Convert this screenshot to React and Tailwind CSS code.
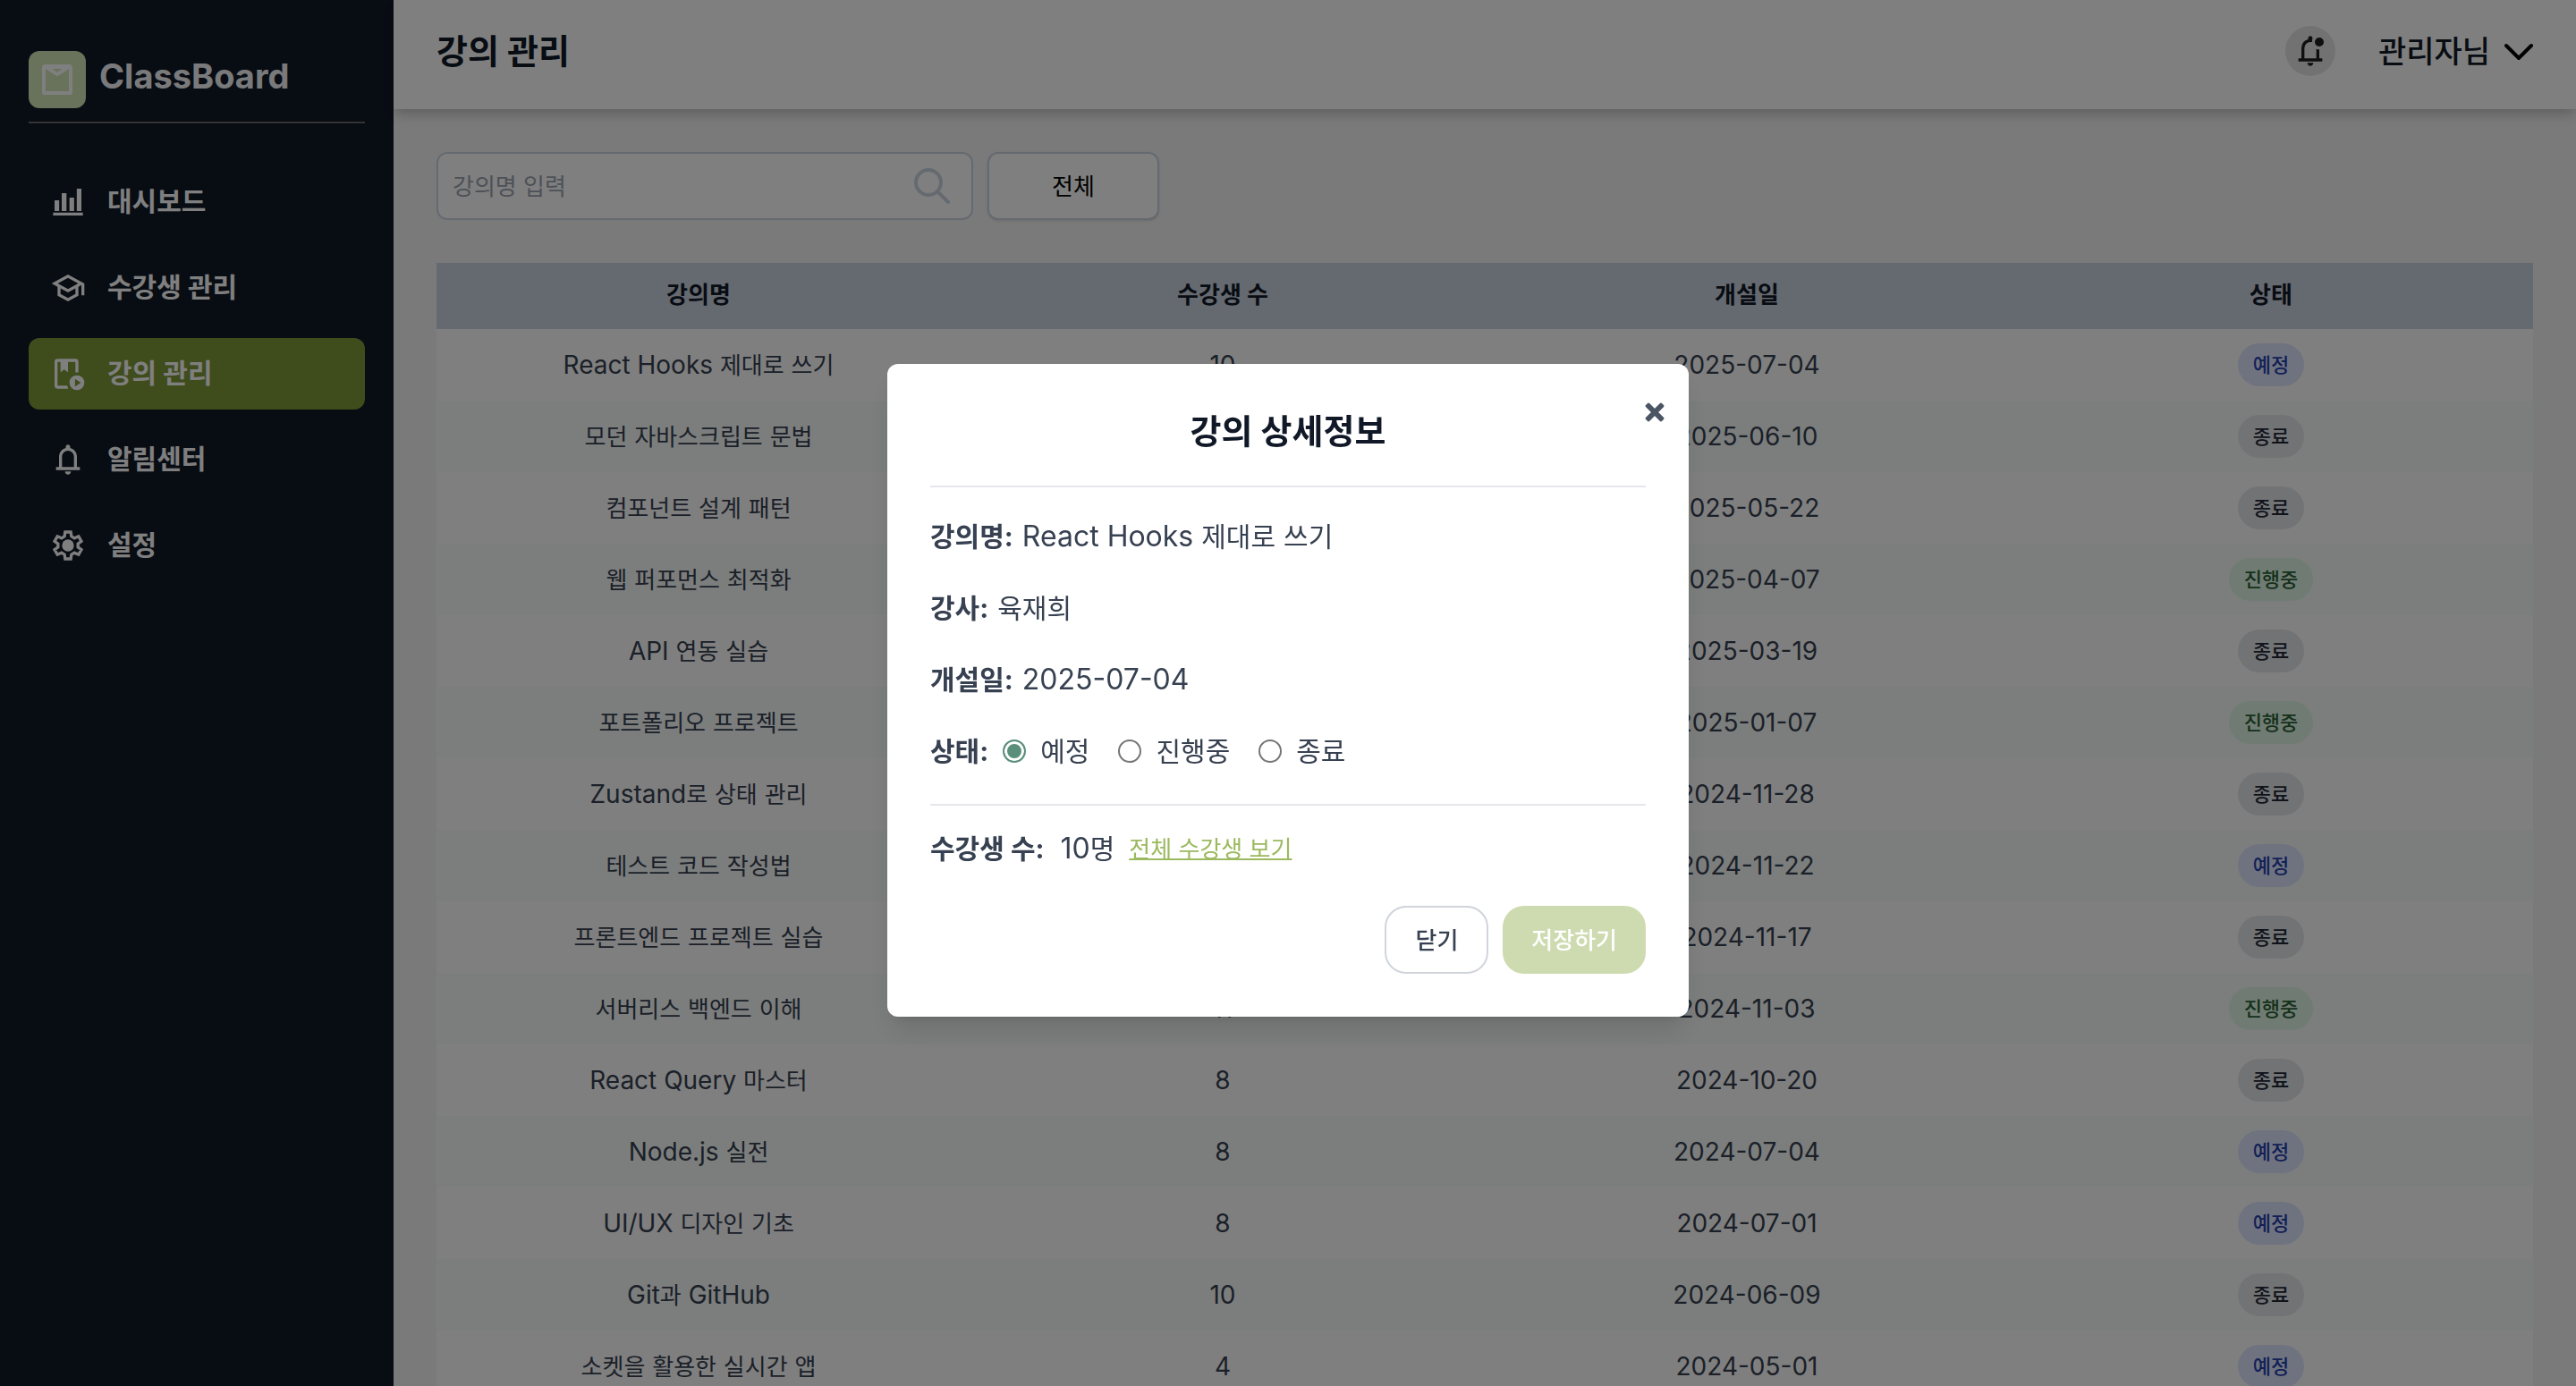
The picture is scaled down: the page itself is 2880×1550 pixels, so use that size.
import { MdOutlineSchool } from "react-icons/md";

const SANS = "font-[Inter,'Noto_Sans_CJK_KR',sans-serif]";

function Mixed({ text, hangul }) {
  return text.split(/([\uAC00-\uD7A3]+)/).map((part, i) =>
    i % 2 ? <span key={i} className={hangul}>{part}</span> : part
  );
}

const ChartIcon = () => (
  <svg viewBox="0 0 24 24" fill="currentColor" className="size-10">
    <path d="M2 19h20v2H2zM3 10.800h3.100V18H3zM7.800 6h3.200v12H7.800zM13 9h3.100v9H13zM17.900 3H21v15h-3.100z" />
  </svg>
);
const BookPlayIcon = () => (
  <svg viewBox="0 0 24 24" fill="currentColor" className="size-10">
    <path d="M5 2h12a2 2 0 0 1 2 2v7.100h-2V4h-5v7L9.500 9.200 7 11V4H5v16h6.500l.6 2H5a2 2 0 0 1-2-2V4a2 2 0 0 1 2-2z" />
    <path fillRule="evenodd" d="M18 13a5 5 0 1 0 0 10 5 5 0 0 0 0-10zm-1.300 7.500v-5l4 2.500z" />
  </svg>
);
const BellIcon = () => (
  <svg viewBox="0 0 24 24" fill="currentColor" className="size-10">
    <path d="M4 19v-2h2v-7q0-2.075 1.250-3.687T10.500 4.200v-.7q0-.625.438-1.062T12 2t1.063.438T13.500 3.500v.7q2 .5 3.250 2.113T18 10v7h2v2zm8 3q-.825 0-1.412-.587T10 20h4q0 .825-.587 1.413T12 22m-4-5h8v-7q0-1.650-1.175-2.825T12 6T9.175 7.175T8 10z" />
  </svg>
);
const GearIcon = () => (
  <svg viewBox="0 0 24 24" fill="none" stroke="currentColor" strokeWidth="2" className="size-10">
    <path d="M10.100 3h3.800l.4 2.900 2 1.200 2.800-1.200 1.900 3.300-2.300 1.700v2.200l2.300 1.700-1.900 3.300-2.800-1.200-2 1.200-.4 2.900h-3.800l-.4-2.900-2-1.200-2.800 1.200L3 14.800l2.300-1.700v-2.200L3 9.200l1.900-3.300 2.800 1.200 2-1.200z" />
    <circle cx="12" cy="12" r="4" fill="currentColor" stroke="none" />
  </svg>
);

const NAV = [
  ["대시보드", ChartIcon],
  ["수강생 관리", () => <MdOutlineSchool className="size-10" />],
  ["강의 관리", BookPlayIcon],
  ["알림센터", BellIcon],
  ["설정", GearIcon],
];

const ROWS = [
  ["React Hooks 제대로 쓰기", 10, "2025-07-04", "예정"],
  ["모던 자바스크립트 문법", 9, "2025-06-10", "종료"],
  ["컴포넌트 설계 패턴", 8, "2025-05-22", "종료"],
  ["웹 퍼포먼스 최적화", 9, "2025-04-07", "진행중"],
  ["API 연동 실습", 8, "2025-03-19", "종료"],
  ["포트폴리오 프로젝트", 10, "2025-01-07", "진행중"],
  ["Zustand로 상태 관리", 9, "2024-11-28", "종료"],
  ["테스트 코드 작성법", 7, "2024-11-22", "예정"],
  ["프론트엔드 프로젝트 실습", 9, "2024-11-17", "종료"],
  ["서버리스 백엔드 이해", 11, "2024-11-03", "진행중"],
  ["React Query 마스터", 8, "2024-10-20", "종료"],
  ["Node.js 실전", 8, "2024-07-04", "예정"],
  ["UI/UX 디자인 기초", 8, "2024-07-01", "예정"],
  ["Git과 GitHub", 10, "2024-06-09", "종료"],
  ["소켓을 활용한 실시간 앱", 4, "2024-05-01", "예정"],
];

const BADGE = {
  예정: "bg-[#dfe7fe] text-[#2540ae]",
  종료: "bg-[#e5e7eb] text-[#1f2937]",
  진행중: "bg-[#e0f8e6] text-[#2b6136]",
};

function Sidebar() {
  return (
    <aside className="w-[440px] shrink-0 bg-[#111827] px-8 pt-[57px] text-white">
      <div className="flex items-start gap-[15px] border-b-2 border-[#69696b] pb-[15px]">
        <div className="flex size-16 items-center justify-center rounded-xl bg-[#d2e5b7]">
          <svg viewBox="0 0 34 34" fill="none" stroke="currentColor" strokeWidth="4" strokeLinejoin="round" className="size-[34px]">
            <path d="M2 3h30v29H2zM3 2h28L17 11z" />
          </svg>
        </div>
        <span className="pt-1 text-[38px] leading-[48px] font-bold text-[#f3f4f6]">ClassBoard</span>
      </div>
      <nav className="mt-12 flex flex-col gap-4">
        {NAV.map(([label, Icon]) => (
          <a
            key={label}
            href="#"
            className={
              label === "강의 관리"
                ? "flex h-20 items-center gap-6 rounded-xl bg-[#7e9838] px-6 text-[30px] font-bold"
                : "flex h-20 items-center gap-6 rounded-xl px-6 text-[30px] font-bold"
            }
          >
            <Icon />
            <span className="pb-0.5">{label}</span>
          </a>
        ))}
      </nav>
    </aside>
  );
}

function Header() {
  return (
    <header className="relative flex h-[122px] shrink-0 items-center justify-between bg-white px-12 pb-2 text-[#111827] shadow-[0_8px_12px_-2px_rgba(0,0,0,0.2)]">
      <h1 className="text-[38px] font-bold">강의 관리</h1>
      <div className="flex items-center gap-12">
        <button aria-label="알림" className="flex size-14 items-center justify-center rounded-full bg-[#e5e5e5] text-[#1f1f1f]">
          <svg viewBox="0 0 24 24" fill="currentColor" className="size-10">
            <path d="M4 19v-2h2v-7q0-2.100 1.200-3.700T10.500 4.200V3.500q0-.6.440-1.060T12 2t1.060.44.440 1.060q-.3.700-.3 1.400 0 .6.100 1.100Q12.700 5.900 12 6 10.300 6 9.200 7.200T8 10v7h8v-6.300q.9.300 2 .3v6h2v2zm8 3q-.8 0-1.400-.6T10 20h4q0 .8-.6 1.400T12 22z" />
            <circle cx="18" cy="6" r="3" />
          </svg>
        </button>
        <button className="flex items-center gap-4 text-[34px] font-medium">
          관리자님
          <svg viewBox="0 0 32 32" fill="none" stroke="#000" strokeWidth="4" strokeLinecap="round" strokeLinejoin="round" className="size-8">
            <path d="M2 10l14 14 14-14" />
          </svg>
        </button>
      </div>
    </header>
  );
}

function Courses() {
  return (
    <main className="px-12 pt-12">
      <div className="flex gap-4">
        <label className="flex h-[76px] w-[600px] items-center rounded-xl border-2 border-[#cbd5e1] bg-white px-4 pr-6">
          <input
            aria-label="강의명 입력"
            placeholder="강의명 입력"
            className="min-w-0 flex-1 text-[26px] outline-none placeholder:text-[#9ca3af]"
          />
          <svg viewBox="0 0 40 40" fill="none" stroke="#cbd5e1" strokeWidth="4" strokeLinecap="round" className="size-10">
            <circle cx="16" cy="16" r="14" />
            <path d="M26 26l12 12" />
          </svg>
        </label>
        <button className="h-[76px] w-48 rounded-xl border-2 border-[#cbd5e1] bg-white text-[26px] shadow-sm">전체</button>
      </div>
      <table className="mt-12 w-full table-fixed text-center">
        <thead>
          <tr className="h-[74px] bg-[#cbd2e1] text-[26px] text-[#111827]">
            {["강의명", "수강생 수", "개설일", "상태"].map((h) => (
              <th key={h} className="p-0 pb-1 font-bold">{h}</th>
            ))}
          </tr>
        </thead>
        <tbody className="text-[28px] leading-10 text-[#374151]">
          {ROWS.map(([name, count, date, state]) => (
            <tr key={name} className="h-20 bg-white even:bg-[#f8fcfa]">
              <td className="p-0"><Mixed text={name} hangul="text-[26px]" /></td>
              <td className="p-0">{count}</td>
              <td className="p-0">{date}</td>
              <td className="p-0">
                <div className="flex justify-center">
                  <span className={`flex h-12 items-center rounded-full px-[17px] text-[22px] font-medium ${BADGE[state]}`}>{state}</span>
                </div>
              </td>
            </tr>
          ))}
        </tbody>
      </table>
    </main>
  );
}

function Field({ label, children }) {
  return (
    <div className="flex h-10 items-center gap-2.5">
      <strong className="text-[30px] font-bold">{label}</strong>
      {children}
    </div>
  );
}

function DetailDialog() {
  return (
    <div className="fixed inset-0 flex items-center justify-center bg-black/50 pb-1.5">
      <section role="dialog" aria-labelledby="dialog-title" className="relative w-[896px] rounded-xl bg-white p-12 text-[32px] text-[#374151] shadow-[0_20px_30px_-6px_rgba(0,0,0,0.12),0_8px_12px_-8px_rgba(0,0,0,0.12)]">
        <button aria-label="닫기" className="absolute top-[43px] right-[27px] text-[#4b5563]">
          <svg viewBox="0 0 22 22" fill="none" stroke="currentColor" strokeWidth="6" strokeLinejoin="round" className="size-[22px]">
            <path d="M3 3l16 16M19 3L3 19" />
            <path strokeWidth="2" d="M4 1.500L1.500 4M18 1.500L20.500 4M1.500 18L4 20.500M20.500 18L18 20.500" strokeLinecap="round" />
          </svg>
        </button>
        <h2 id="dialog-title" className="border-b-2 border-[#e5e7eb] pb-[34px] text-center text-[38px] leading-[54px] font-bold text-[#111827]">강의 상세정보</h2>
        <div className="flex flex-col gap-10 border-b-2 border-[#e5e7eb] pt-[35px] pb-[39px]">
          <Field label="강의명:"><span><Mixed text="React Hooks 제대로 쓰기" hangul="text-[30px]" /></span></Field>
          <Field label="강사:"><span className="text-[30px]">육재희</span></Field>
          <Field label="개설일:"><span>2025-07-04</span></Field>
          <Field label="상태:">
            <div className="flex gap-8 pl-1.5 text-[30px]">
              {["예정", "진행중", "종료"].map((s) => (
                <label key={s} className="flex items-center gap-4">
                  <input
                    type="radio"
                    name="state"
                    defaultChecked={s === "예정"}
                    className="size-[26px] appearance-none rounded-full border-2 border-[#767676] checked:border-[#5a8f7b] checked:bg-[#5a8f7b] checked:shadow-[inset_0_0_0_3px_white]"
                  />
                  {s}
                </label>
              ))}
            </div>
          </Field>
        </div>
        <div className="mt-7 flex h-10 items-center gap-4">
          <strong className="pr-0.5 text-[30px] font-bold">수강생 수:</strong>
          <span><Mixed text="10명" hangul="text-[30px]" /></span>
          <a href="#" className="text-[26px] text-[#9bb95e] underline decoration-2">전체 수강생 보기</a>
        </div>
        <div className="mt-11 flex justify-end gap-4 text-[26px] font-medium">
          <button className="h-[76px] rounded-3xl border-2 border-[#d1d5db] px-8">닫기</button>
          <button className="h-[76px] rounded-3xl bg-[#cedbb0] px-8 text-white">저장하기</button>
        </div>
      </section>
    </div>
  );
}

export default function App() {
  return (
    <div className={`flex h-screen overflow-hidden bg-[#f4f4f4] ${SANS}`}>
      <Sidebar />
      <div className="min-w-0 flex-1">
        <Header />
        <Courses />
      </div>
      <DetailDialog />
    </div>
  );
}
